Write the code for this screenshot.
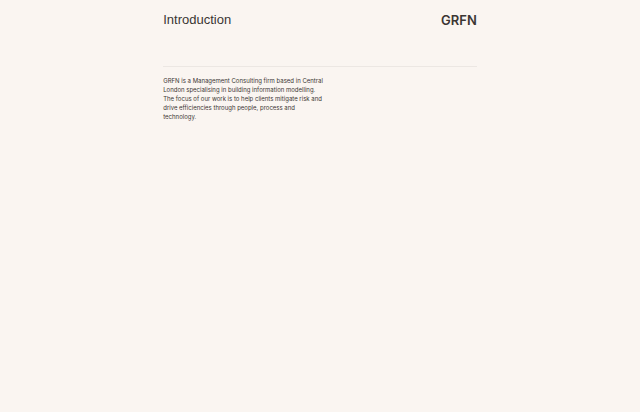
<main>
  <header>
    <h1>Introduction</h1>
    <a class="logo" href="/">GRFN</a>
  </header>
  <p>
    GRFN is a Management Consulting firm based in Central London specialising in building information
    modelling. The focus of our work is to help clients mitigate risk and drive efficiencies through
    people, process and technology.
  </p>
</main>

<style>
  :global(body) {
    background: #faf5f1;
    color: #3b3633;
    font-family: "Liberation Sans", Arial, sans-serif;
  }

  main {
    width: 49%;
    margin: 0 auto;
  }

  header {
    display: flex;
    justify-content: space-between;
    align-items: flex-start;
    padding: 12px 0 38px;
    border-bottom: 1px solid #ece7e3;
  }

  h1,
  .logo {
    margin: 0;
    font-size: 13px;
    line-height: 16px;
  }

  h1 {
    font-weight: 400;
  }

  .logo {
    color: inherit;
    font-family: Inter, "Liberation Sans", Arial, sans-serif;
    font-weight: 600;
    text-decoration: none;
  }

  p {
    width: 51%;
    margin: 9px 0 0;
    font-family: Inter, "Liberation Sans", Arial, sans-serif;
    font-size: 6px;
    line-height: 9px;
  }
</style>
